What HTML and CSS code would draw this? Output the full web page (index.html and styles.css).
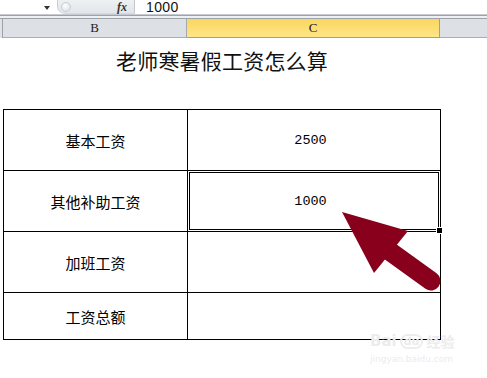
FILE: index.html
```html
<!DOCTYPE html>
<html lang="zh">
<head>
<meta charset="utf-8">
<link rel="stylesheet" href="styles.css">
</head>
<body>
<div class="app">
  <div class="formula-bar">
    <div class="namebox"><span class="dd"></span></div>
    <div class="grip">
      <span class="knob"></span>
      <span class="fx">fx</span>
    </div>
    <div class="input">1000</div>
  </div>
  <div class="rule-a"></div>
  <div class="rule-b"></div>
  <div class="gap"></div>
  <div class="col-headers">
    <div class="corner"></div>
    <div class="colh colb">B</div>
    <div class="colh colc">C</div>
    <div class="colrest"></div>
  </div>
  <div class="sheet">
    <div class="title">老师寒暑假工资怎么算</div>
    <div class="grid">
      <div class="cell label">基本工资</div>
      <div class="cell num">2500</div>
      <div class="cell label">其他补助工资</div>
      <div class="cell num active">1000<span class="handle"></span></div>
      <div class="cell label">加班工资</div>
      <div class="cell num"></div>
      <div class="cell label short">工资总额</div>
      <div class="cell num short"></div>
    </div>
  </div>
  <svg class="arrow" width="487" height="378" viewBox="0 0 487 378">
    <line x1="388" y1="250" x2="431" y2="281" stroke="#88001b" stroke-width="19" stroke-linecap="round"/>
    <polygon points="342,212 408,231 374,273" fill="#88001b"/>
  </svg>
  <div class="watermark">
    <div class="wm-top"><span class="wm-bai">Bai</span><span class="wm-du">du</span><span class="wm-jy">经验</span></div>
    <div class="wm-url">jingyan.baidu.com</div>
  </div>
</div>
</body>
</html>
```
FILE: styles.css
```css
html, body {
  margin: 0;
  padding: 0;
  background: #fff;
}
.app {
  position: relative;
  width: 487px;
  height: 378px;
  overflow: hidden;
  font-family: "Noto Sans CJK SC", "DejaVu Sans", sans-serif;
  color: #000;
}
.formula-bar {
  display: flex;
  height: 14px;
  background: #fff;
}
.namebox {
  width: 57px;
  position: relative;
}
.dd {
  position: absolute;
  left: 44px;
  top: 6px;
  width: 0;
  height: 0;
  border-left: 3.5px solid transparent;
  border-right: 3.5px solid transparent;
  border-top: 4px solid #333;
}
.grip {
  width: 78px;
  display: flex;
  align-items: center;
  justify-content: space-between;
  background: linear-gradient(#eef0f3, #e2e6ea);
  border-radius: 0 0 0 8px;
  border-left: 1px solid #c9cdd3;
  border-bottom: 1px solid #d6dade;
  border-right: 1px solid #c3c7cd;
  box-sizing: border-box;
  height: 14px;
  padding: 0 7px 0 3px;
}
.knob {
  width: 8px;
  height: 8px;
  border-radius: 50%;
  background: radial-gradient(circle at 40% 35%, #fdfdfd, #d9dde2);
  border: 1px solid #c9ced4;
}
.fx {
  font-family: "Liberation Serif", serif;
  font-style: italic;
  font-weight: bold;
  font-size: 12px;
  color: #333;
  line-height: 14px;
}
.input {
  padding-left: 11px;
  font-family: "Liberation Sans", sans-serif;
  font-size: 14px;
  letter-spacing: 0.4px;
  line-height: 14px;
  color: #111;
}
.rule-a { height: 1px; background: #c7cbd1; }
.rule-b { height: 1px; background: #9ea3aa; }
.gap { height: 2px; background: #eef0f3; }
.col-headers {
  display: flex;
  border-top: 1px solid #9ca2a9;
  background: #dde1e6;
  box-sizing: border-box;
  height: 20px;
}
.corner {
  width: 2px;
  border-right: 1px solid #9ca2a9;
  background: #dfe3e8;
}
.colh {
  display: flex;
  align-items: center;
  justify-content: center;
  font-family: "Liberation Serif", serif;
  font-size: 13px;
  color: #222;
  box-sizing: border-box;
}
.colb {
  width: 184px;
  border-right: 1px solid #a3a9b0;
  border-bottom: 1px solid #a8aeb5;
}
.colc {
  width: 253px;
  background: linear-gradient(#fad660, #ffe589);
  border-right: 1px solid #d09a38;
  border-bottom: 1px solid #d09a38;
}
.colrest {
  flex: 1;
  border-bottom: 1px solid #a8aeb5;
}
.sheet {
  padding: 12px 0 0 3px;
}
.title {
  width: 438px;
  text-align: center;
  font-size: 21px;
  line-height: 21px;
  letter-spacing: 0.2px;
  color: #111;
  margin-bottom: 38px;
}
.grid {
  display: grid;
  grid-template-columns: 183px 252px;
  grid-template-rows: 60px 60px 60px 46px;
  gap: 1px;
  padding: 1px;
  background: #000;
  width: 436px;
}
.cell {
  background: #fff;
  display: flex;
  align-items: center;
  justify-content: center;
  font-size: 15px;
}
.num {
  font-family: "Liberation Mono", monospace;
  font-size: 13.5px;
  padding-right: 7px;
}
.active {
  position: relative;
  box-shadow: inset 0 0 0 1px #fff, inset 0 0 0 2px #000;
}
.handle {
  position: absolute;
  right: -3px;
  bottom: -3px;
  width: 5px;
  height: 5px;
  background: #000;
  border: 1px solid #fff;
}
.arrow {
  position: absolute;
  left: 0;
  top: 0;
  pointer-events: none;
}
.watermark {
  position: absolute;
  left: 370px;
  top: 333px;
  color: #ececec;
  font-family: "DejaVu Sans", sans-serif;
}
.wm-top {
  display: flex;
  align-items: center;
  font-weight: bold;
  font-size: 15px;
  line-height: 17px;
}
.wm-du {
  display: inline-block;
  margin: 0 3px;
  padding: 0 2px;
  border-radius: 8px;
  border: 2px solid #ededed;
  font-size: 11px;
  line-height: 11px;
}
.wm-jy {
  font-family: "Noto Sans CJK SC", sans-serif;
  font-size: 14px;
}
.wm-url {
  font-size: 9px;
  line-height: 12px;
  margin-top: 3px;
}
```
